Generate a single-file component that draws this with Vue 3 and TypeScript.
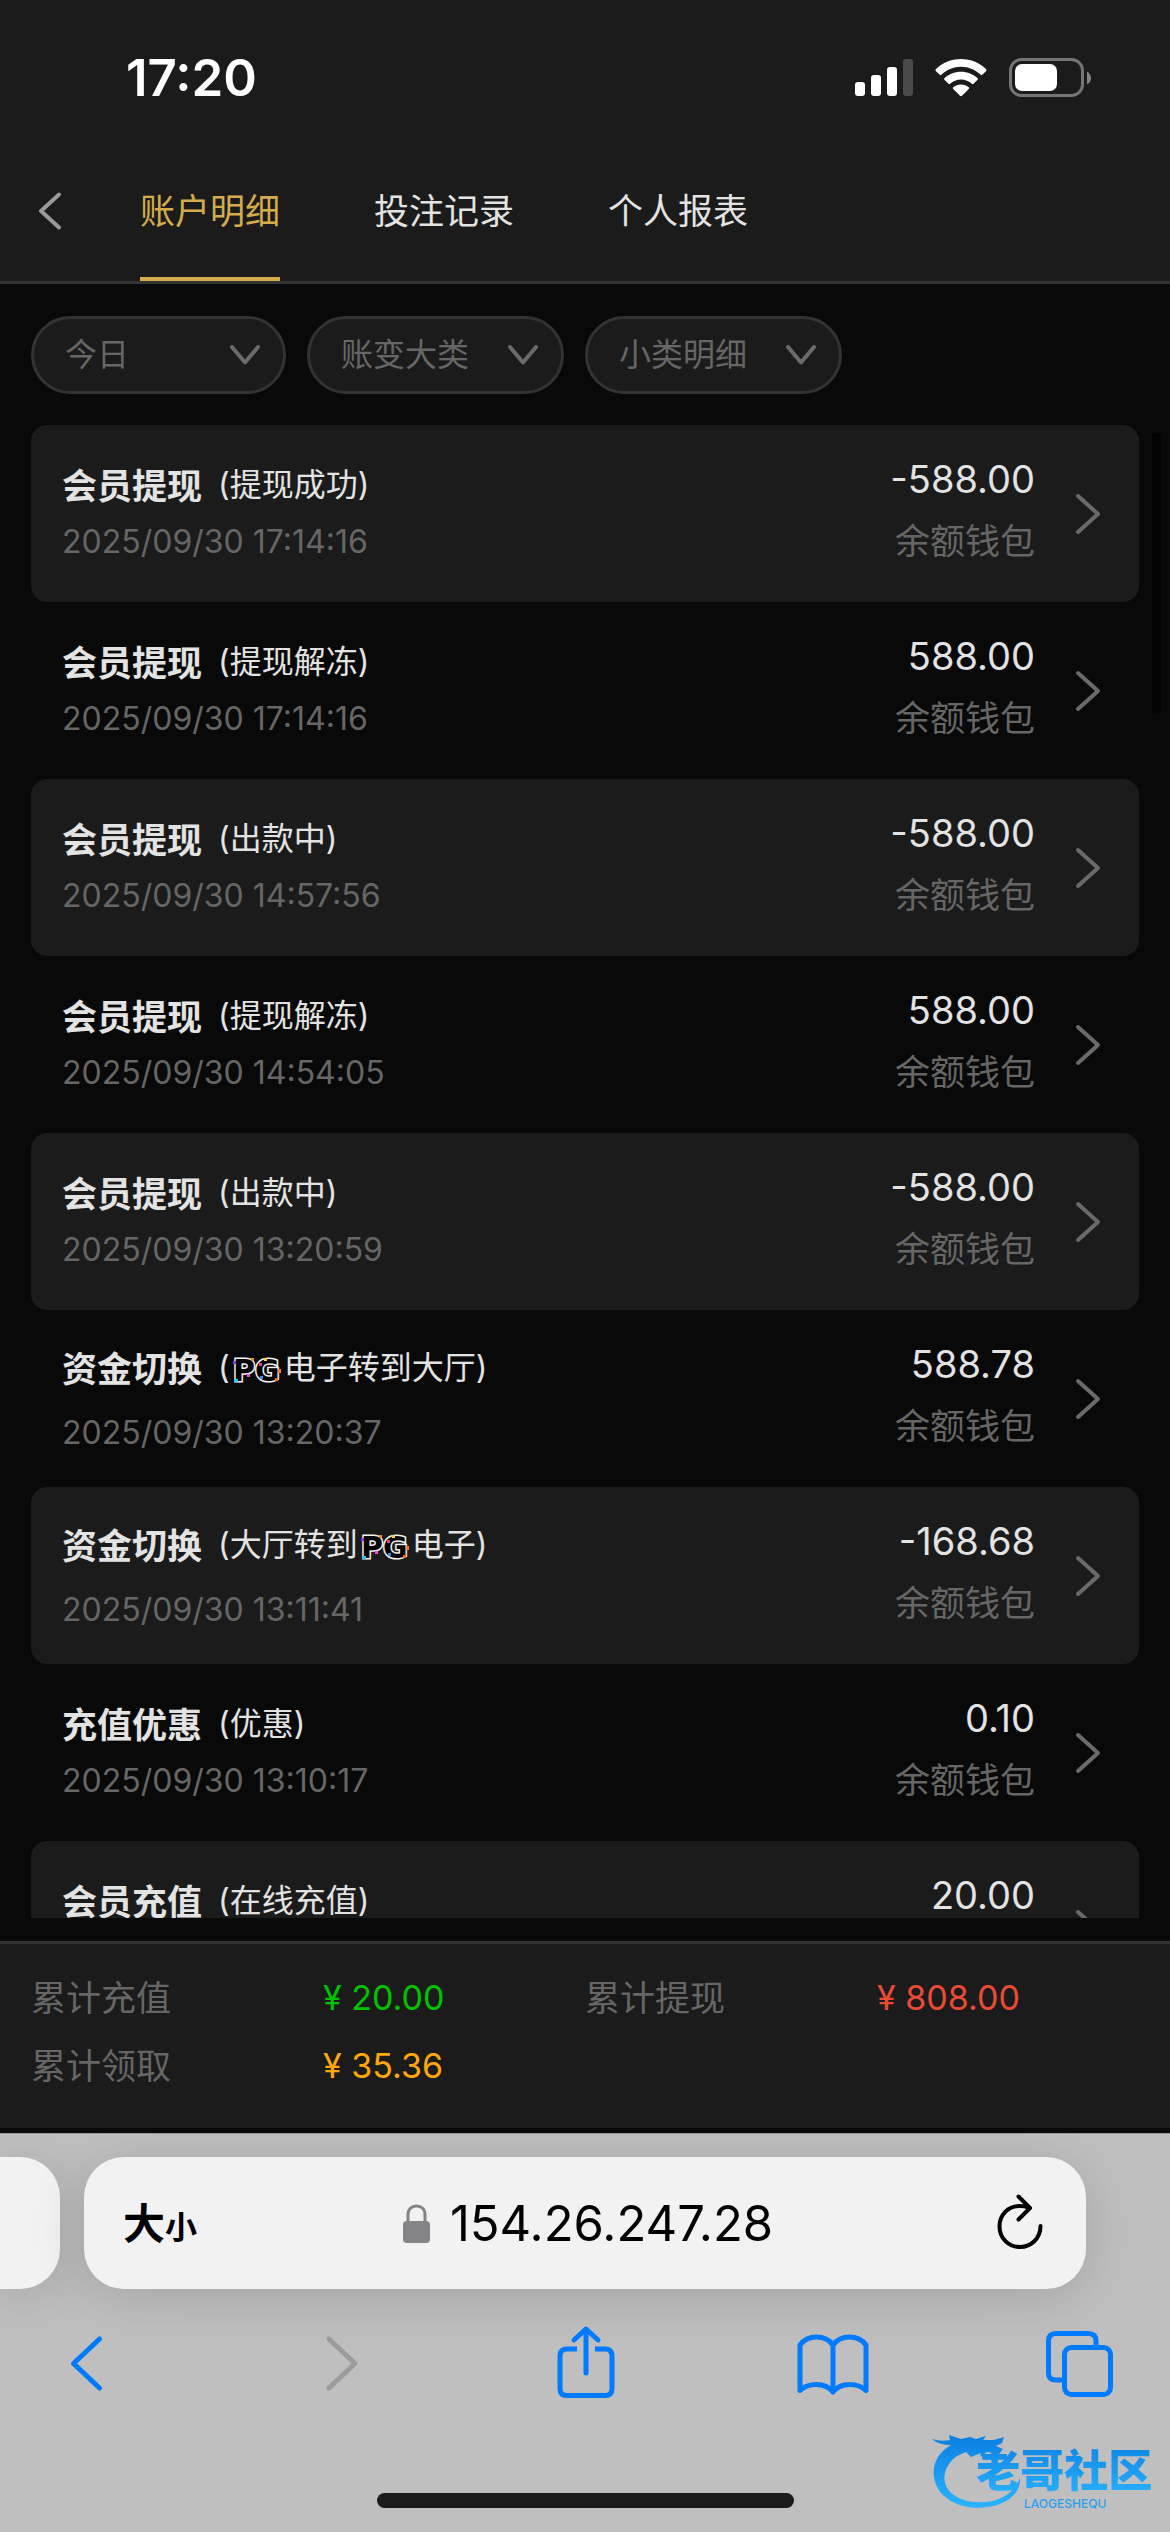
<script setup lang="ts">
import { ref } from 'vue'

interface NotePart {
  text?: string
  logo?: boolean
}

interface LedgerRecord {
  title: string
  note: NotePart[]
  time: string
  amount: string
}

interface Total {
  label: string
  value: string
  tone: string
}

const wallet = '余额钱包'
const tabs = ['账户明细', '投注记录', '个人报表']
const activeTab = ref(0)

const filters = [
  { id: 'day', name: '日期', value: '今日' },
  { id: 'category', name: '大类', value: '账变大类' },
  { id: 'detail', name: '小类', value: '小类明细' },
]

const records: LedgerRecord[] = [
  { title: '会员提现', note: [{ text: '(提现成功)' }], time: '2025/09/30 17:14:16', amount: '-588.00' },
  { title: '会员提现', note: [{ text: '(提现解冻)' }], time: '2025/09/30 17:14:16', amount: '588.00' },
  { title: '会员提现', note: [{ text: '(出款中)' }], time: '2025/09/30 14:57:56', amount: '-588.00' },
  { title: '会员提现', note: [{ text: '(提现解冻)' }], time: '2025/09/30 14:54:05', amount: '588.00' },
  { title: '会员提现', note: [{ text: '(出款中)' }], time: '2025/09/30 13:20:59', amount: '-588.00' },
  { title: '资金切换', note: [{ text: '(' }, { logo: true }, { text: '电子转到大厅)' }], time: '2025/09/30 13:20:37', amount: '588.78' },
  { title: '资金切换', note: [{ text: '(大厅转到' }, { logo: true }, { text: '电子)' }], time: '2025/09/30 13:11:41', amount: '-168.68' },
  { title: '充值优惠', note: [{ text: '(优惠)' }], time: '2025/09/30 13:10:17', amount: '0.10' },
  { title: '会员充值', note: [{ text: '(在线充值)' }], time: '', amount: '20.00' },
]

const totals: Total[] = [
  { label: '累计充值', value: '¥ 20.00', tone: 'green' },
  { label: '累计提现', value: '¥ 808.00', tone: 'red' },
  { label: '累计领取', value: '¥ 35.36', tone: 'orange' },
]

const hasLogo = (record: LedgerRecord): boolean => record.note.some((part) => part.logo)
</script>

<template>
  <div class="page">
    <header class="header">
      <div class="status">
        <span class="clock">17:20</span>
        <div class="status-icons">
          <svg width="58" height="38" viewBox="0 0 58 38" aria-hidden="true">
            <rect x="0" y="23" width="10" height="14" rx="3" fill="#fff" />
            <rect x="16" y="16" width="10" height="21" rx="3" fill="#fff" />
            <rect x="32" y="8" width="10" height="29" rx="3" fill="#fff" />
            <rect x="48" y="0" width="10" height="37" rx="3" fill="#4a4a4a" />
          </svg>
          <svg width="52" height="38" viewBox="0 0 52 38" aria-hidden="true">
            <path d="M26 0C36 0 45 4 51.200 10.200Q52 11 51.200 11.900L47.300 15.800Q46.500 16.500 45.700 15.700C40.500 10.800 33.500 7.700 26 7.700S11.500 10.800 6.300 15.700Q5.500 16.500 4.700 15.800L.8 11.900Q0 11 .8 10.200C7 4 16 0 26 0Z" fill="#fff" />
            <path d="M26 12.700C32.500 12.700 38.300 15.200 42.600 19.200Q43.400 20 42.600 20.800L38.500 24.800Q37.700 25.500 36.900 24.800C34 22.200 30.200 20.500 26 20.500S18 22.200 15.100 24.800Q14.300 25.500 13.500 24.800L9.400 20.800Q8.600 20 9.400 19.200C13.700 15.200 19.500 12.700 26 12.700Z" fill="#fff" />
            <path d="M26 25.500C29 25.500 31.800 26.600 33.800 28.300Q34.600 29.100 33.800 29.900L27 36.700Q26 37.600 25 36.700L18.200 29.900Q17.400 29.100 18.200 28.300C20.200 26.600 23 25.500 26 25.500Z" fill="#fff" />
          </svg>
          <svg width="82" height="40" viewBox="0 0 82 40" aria-hidden="true">
            <rect x="1.500" y="1.500" width="72" height="36" rx="11" fill="none" stroke="#757575" stroke-width="3" />
            <rect x="6" y="6" width="42" height="27" rx="7" fill="#fff" />
            <path d="M78 13.500Q82 16 82 20T78 26.500Z" fill="#858585" />
          </svg>
        </div>
      </div>

      <nav class="nav">
        <button class="back" type="button" aria-label="返回">
          <svg width="24" height="38" viewBox="0 0 24 38" aria-hidden="true">
            <path d="M21 2.500L3 19L21 35.500" fill="none" stroke="#999" stroke-width="4" stroke-linecap="round" stroke-linejoin="round" />
          </svg>
        </button>
        <div class="tabs">
          <button
            v-for="(tab, index) in tabs"
            :key="tab"
            class="tab"
            :class="{ active: index === activeTab }"
            type="button"
            @click="activeTab = index"
          >
            {{ tab }}
          </button>
        </div>
      </nav>
    </header>

    <main class="content">
      <div class="filters">
        <label v-for="filter in filters" :key="filter.id" class="pill" :class="filter.id">
          <select class="pill-select" :aria-label="filter.name">
            <option>{{ filter.value }}</option>
          </select>
          <svg class="pill-arrow" width="30" height="20" viewBox="0 0 30 20" aria-hidden="true">
            <path d="M2 2L15 17.500L28 2" fill="none" stroke="#6a6a6a" stroke-width="4" stroke-linecap="round" stroke-linejoin="round" />
          </svg>
        </label>
      </div>

      <ul class="list">
        <li v-for="(record, index) in records" :key="index" class="record">
          <div class="info">
            <div class="heading" :class="{ tall: hasLogo(record) }">
              <strong class="title">{{ record.title }}</strong>
              <span class="note">
                <template v-for="(part, i) in record.note" :key="i">
                  <svg v-if="part.logo" class="pg" width="50" height="26" viewBox="0 0 50 26">
                    <text x="1" y="24" class="pg-text">PG</text>
                    <rect x="1" y="4" width="3" height="3" fill="#7a3bf0" />
                    <rect x="19" y="1" width="3" height="3" fill="#ff8a1e" />
                    <rect x="15" y="17" width="3" height="3" fill="#f04be0" />
                    <rect x="2" y="22" width="4" height="3" fill="#35c8e8" />
                    <rect x="32" y="1" width="3" height="3" fill="#ffd02e" />
                    <rect x="27" y="6" width="3" height="3" fill="#f0357a" />
                    <rect x="28" y="19" width="3" height="3" fill="#2f8df0" />
                    <rect x="46" y="12" width="3" height="4" fill="#ff7a2e" />
                    <rect x="43" y="21" width="3" height="3" fill="#ff6a1e" />
                  </svg>
                  <template v-else>{{ part.text }}</template>
                </template>
              </span>
            </div>
            <time class="time">{{ record.time }}</time>
          </div>
          <div class="money">
            <span class="amount">{{ record.amount }}</span>
            <span class="wallet">{{ wallet }}</span>
          </div>
          <svg width="26" height="42" viewBox="0 0 26 42" aria-hidden="true">
            <path d="M3 3L23 21L3 39" fill="none" stroke="#6a6a6a" stroke-width="4" stroke-linecap="round" stroke-linejoin="round" />
          </svg>
        </li>
      </ul>
      <div class="scrollbar"></div>
    </main>

    <footer class="totals">
      <dl class="totals-grid">
        <div v-for="total in totals" :key="total.label" class="total">
          <dt>{{ total.label }}</dt>
          <dd :class="total.tone">{{ total.value }}</dd>
        </div>
      </dl>
    </footer>

    <section class="browser">
      <div class="address-row">
        <div class="previous-page"></div>
        <div class="address">
          <button class="text-size" type="button" aria-label="大小">
            <span class="big">大</span><span class="small">小</span>
          </button>
          <label class="location">
            <svg width="27" height="40" viewBox="0 0 27 40" aria-hidden="true">
              <path d="M5 18V11C5 5 8.500 2 13.500 2S22 5 22 11V18" fill="none" stroke="#848486" stroke-width="3" />
              <rect x="0" y="17" width="27" height="22" rx="4" fill="#848486" />
            </svg>
            <input class="url" type="text" value="154.26.247.28" aria-label="网址" />
          </label>
          <button class="reload" type="button" aria-label="刷新">
            <svg width="46" height="56" viewBox="0 0 46 56" aria-hidden="true">
              <path d="M31 13.500C28.500 12.300 26 12 23 12C11 12 2.500 21 2.500 32.500S11.500 53 23 53S43.500 44 43.500 32" fill="none" stroke="#000" stroke-width="4" stroke-linecap="round" />
              <path d="M21.500 2.500L33 14L21.500 25.500" fill="none" stroke="#000" stroke-width="4" stroke-linecap="round" stroke-linejoin="round" />
            </svg>
          </button>
        </div>
      </div>

      <div class="toolbar">
        <button type="button" aria-label="后退">
          <svg width="72" height="72" viewBox="0 0 72 72"><path d="M48.500 12L22.500 36.500L48.500 61" /></svg>
        </button>
        <button type="button" aria-label="前进" disabled>
          <svg width="72" height="72" viewBox="0 0 72 72"><path d="M30 12L56 36.500L30 61" /></svg>
        </button>
        <button type="button" aria-label="分享">
          <svg width="72" height="72" viewBox="0 0 72 72">
            <path d="M38 46V2.500M26 13L38 2L50 13" />
            <path stroke-linecap="butt" d="M29 22H19Q12 22 12 29V61.500Q12 68.500 19 68.500H57Q64 68.500 64 61.500V29Q64 22 57 22H47" />
          </svg>
        </button>
        <button type="button" aria-label="书签">
          <svg width="72" height="72" viewBox="0 0 72 72">
            <path d="M37 18C33 12.500 27 10 20.500 10S8 12.500 4 18V63.500C8 59.500 14 57.500 20.500 57.500S33 60 37 65C41 60 47 57.500 53.500 57.500S66 59.500 70 63.500V18C66 12.500 60 10 53.500 10S41 12.500 37 18ZM37 18V65" />
          </svg>
        </button>
        <button type="button" aria-label="标签页">
          <svg width="72" height="72" viewBox="0 0 72 72">
            <path d="M52 20V14Q52 6.500 44.500 6.500H12Q4.500 6.500 4.500 14V46Q4.500 53 12 53H20" />
            <rect x="20.500" y="20.500" width="46" height="47" rx="7" />
          </svg>
        </button>
      </div>

      <div class="home-indicator"></div>

      <svg class="watermark" width="226" height="82" viewBox="0 0 226 82">
        <defs>
          <linearGradient id="wave" x1="0" y1="0" x2="0" y2="1">
            <stop offset="0" stop-color="#0a7fe0" />
            <stop offset="1" stop-color="#2ab4ff" />
          </linearGradient>
        </defs>
        <path fill="url(#wave)" d="M2 11Q11 14 20 12L19 7L31 11L40 9L46 11L56 8L53 12L64 12L74 9L72 15L66 18L73 21L69 26L57 24L50 29L51 25L41 29L36 24C20 29 12 43 15 55C20 71 41 77 62 73C76 70 85 62 90 50C91 65 77 76 58 79C32 83 7 71 4 49C2 35 9 24 21 17Q9 17 2 11Z" />
        <text x="46" y="59" class="mark-name" fill="url(#wave)">老哥社区</text>
        <text x="94" y="80" class="mark-latin" fill="#2a9fee">LAOGESHEQU</text>
      </svg>
    </section>
  </div>
</template>

<style>
body {
  margin: 0;
  background: #090909;
}
</style>

<style scoped>
.page {
  display: flex;
  flex-direction: column;
  height: 100vh;
  overflow: hidden;
  background: #090909;
  color: #e3e3e3;
  font-family: Inter, "Noto Sans CJK SC", sans-serif;
  font-size: 35px;
  line-height: 48px;
}

button,
select,
input {
  margin: 0;
  padding: 0;
  border: 0;
  background: none;
  color: inherit;
  font: inherit;
  appearance: none;
  outline: 0;
}

svg {
  display: block;
  flex: none;
}

.header {
  flex: none;
  background: #1b1b1b;
  border-bottom: 3px solid #333;
}

.status {
  display: flex;
  align-items: center;
  justify-content: space-between;
  box-sizing: border-box;
  height: 141px;
  padding: 15px 79px 0 126px;
}

.clock {
  color: #fff;
  font-size: 51px;
  font-weight: 600;
}

.status-icons {
  display: flex;
  align-items: center;
  gap: 22px;
}

.nav {
  display: flex;
  height: 140px;
}

.back {
  width: 140px;
  padding-left: 38px;
}

.tabs {
  display: flex;
  gap: 94px;
}

.tab {
  border-top: 4px solid transparent;
  border-bottom: 4px solid transparent;
  white-space: nowrap;
}

.tab.active {
  color: #d4ac4c;
  border-bottom-color: #d4ac4c;
}

.content {
  position: relative;
  display: flex;
  flex: 1;
  flex-direction: column;
  min-height: 0;
  padding: 32px 31px 23px;
}

.filters {
  display: flex;
  flex: none;
  gap: 21px;
  margin-bottom: 31px;
}

.pill {
  display: flex;
  align-items: center;
  box-sizing: border-box;
  width: 257px;
  height: 78px;
  padding: 0 23px 0 31px;
  border: 3px solid #333;
  border-radius: 39px;
  background: #1b1b1b;
}

.pill.day {
  width: 255px;
}

.pill-select {
  flex: 1;
  min-width: 0;
  color: #666;
  font-size: 32px;
}

.list {
  flex: 1;
  min-height: 0;
  margin: 0;
  padding: 0;
  overflow: hidden;
  list-style: none;
}

.record {
  display: flex;
  align-items: center;
  height: 177px;
  padding: 0 38px 0 31px;
  border-radius: 16px;
}

.record:nth-child(odd) {
  background: #1b1b1b;
}

.info {
  flex: 1;
}

.heading {
  display: flex;
  align-items: center;
  box-sizing: border-box;
  height: 57px;
}

.heading.tall {
  height: 69px;
  padding-bottom: 4px;
}

.title {
  margin-right: 16px;
  font-weight: 700;
}

.note {
  display: flex;
  align-items: center;
  margin-bottom: 2px;
  font-size: 32px;
}

.pg {
  margin: 4px 2px 0;
  overflow: visible;
}

.pg-text {
  fill: #000;
  stroke: #f2f2f2;
  stroke-width: 3px;
  paint-order: stroke;
  font-family: "DejaVu Sans", sans-serif;
  font-size: 30px;
  font-weight: 700;
}

.time {
  display: block;
  height: 56px;
  color: #666;
  font-size: 32px;
  line-height: 56px;
}

.money {
  display: flex;
  flex-direction: column;
  align-items: flex-end;
  margin-right: 40px;
  padding-bottom: 6px;
}

.amount {
  font-size: 38px;
  line-height: 60px;
}

.wallet {
  color: #666;
  line-height: 64px;
}

.scrollbar {
  position: absolute;
  top: 149px;
  right: 9px;
  width: 9px;
  height: 280px;
  border-radius: 5px;
  background: #030303;
}

.totals {
  flex: none;
  padding: 20px 31px 28px;
  border-top: 3px solid #333;
  border-bottom: 5px solid #090909;
  background: #1b1b1b;
}

.totals-grid {
  display: grid;
  grid-template-columns: 1fr 1fr;
  margin: 0;
}

.total {
  display: flex;
  line-height: 68px;
}

.total dt {
  width: 292px;
  color: #666;
}

.total dd {
  margin: 0;
  font-size: 34px;
}

.green {
  color: #00c300;
}

.red {
  color: #e94b35;
}

.orange {
  color: #ffa60a;
}

.browser {
  position: relative;
  display: flex;
  flex: none;
  flex-direction: column;
  box-sizing: border-box;
  height: 399px;
  padding: 23px 0 24px;
  border-top: 1px solid #999;
  background: #bfbfbf;
  color: #000;
  overflow: hidden;
}

.address-row {
  display: flex;
  gap: 24px;
  height: 132px;
  padding-right: 84px;
}

.previous-page,
.address {
  background: #f2f2f2;
  box-shadow: 0 8px 56px rgba(0, 0, 0, 0.14);
}

.previous-page {
  width: 60px;
  border-radius: 0 40px 40px 0;
}

.address {
  display: flex;
  flex: 1;
  align-items: center;
  padding: 2px 43px 0 39px;
  border-radius: 40px;
}

.text-size {
  display: flex;
  align-items: baseline;
  padding-top: 4px;
  font-weight: 700;
}

.big {
  font-size: 42px;
}

.small {
  font-size: 32px;
}

.location {
  display: flex;
  flex: 1;
  align-items: center;
  justify-content: center;
  gap: 20px;
}

.url {
  field-sizing: content;
  font-size: 49px;
  line-height: 60px;
}

.reload {
  padding: 0 0 4px 18px;
}

.toolbar {
  display: flex;
  align-items: center;
  justify-content: space-between;
  height: 148px;
  padding: 0 54px 0 51px;
}

.toolbar svg {
  overflow: visible;
  fill: none;
  stroke: #007aff;
  stroke-width: 5px;
  stroke-linecap: round;
  stroke-linejoin: round;
}

.toolbar button:disabled svg {
  stroke: #9c9c9c;
}

.home-indicator {
  width: 417px;
  height: 15px;
  margin: auto auto 0;
  border-radius: 8px;
  background: #1b1b1b;
}

.watermark {
  position: absolute;
  right: 14px;
  bottom: 22px;
}

.mark-name {
  font-family: "Noto Sans CJK SC", sans-serif;
  font-size: 44px;
  font-weight: 900;
}

.mark-latin {
  font-family: Inter, sans-serif;
  font-size: 12px;
  font-weight: 500;
}
</style>
